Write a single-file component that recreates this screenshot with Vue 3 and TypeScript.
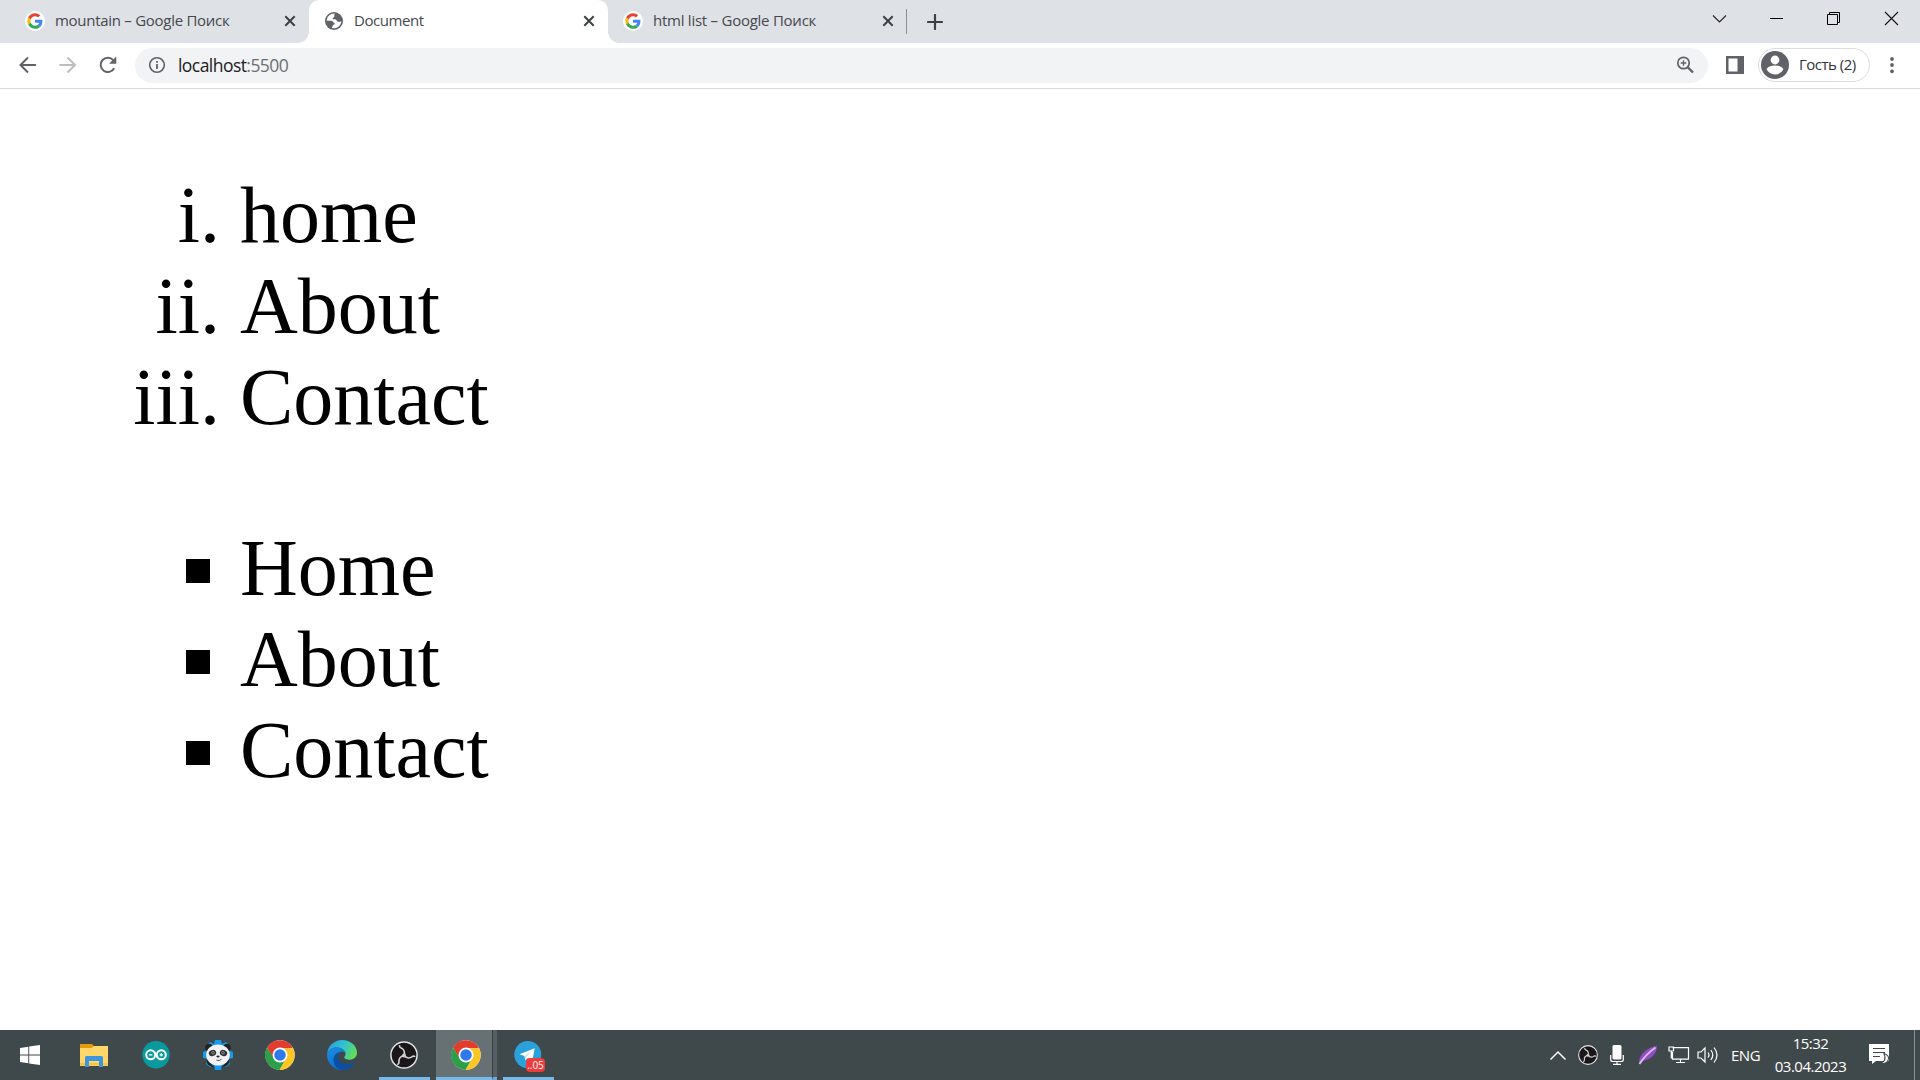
<script setup lang="ts">
interface Tab {
  title: string
  icon: 'google' | 'globe'
  active?: boolean
  spacing: number
}

const tabs: Tab[] = [
  { title: 'mountain – Google Поиск', icon: 'google', spacing: -0.28 },
  { title: 'Document', icon: 'globe', active: true, spacing: -0.45 },
  { title: 'html list – Google Поиск', icon: 'google', spacing: -0.25 },
]

const ordered: string[] = ['home', 'About', 'Contact']
const unordered: string[] = ['Home', 'About', 'Contact']
</script>

<template>
  <div class="screen">
    <svg class="defs" width="0" height="0" aria-hidden="true">
      <symbol id="chrome" viewBox="0 0 48 48">
        <circle cx="24" cy="24" r="23.5" fill="#fff" />
        <path d="M24 13h20.8A24 24 0 0 0 3.2 12l10.4 18z" fill="#e33b2e" />
        <path d="M33.5 29.5 23.1 48A24 24 0 0 0 44.8 13H24z" fill="#fcc625" />
        <path d="M14.5 29.5 3.2 12A24 24 0 0 0 23.1 48l10.4-18.5z" fill="#2e9f49" />
        <circle cx="24" cy="24" r="12" fill="#fff" />
        <circle cx="24" cy="24" r="9.2" fill="#2f79ea" />
      </symbol>
      <symbol id="obs" viewBox="0 0 28 28">
        <circle cx="14" cy="14" r="13.1" fill="#191719" stroke="#e4e4e4" stroke-width="1.5" />
        <g fill="none" stroke="#cfcfcf" stroke-width="1.700" stroke-linecap="round">
          <path d="M14 14.300C15.300 10.500 13.200 7.800 10.800 6.800Q9.300 6 9.500 4.800" />
          <path d="M14 14.300C15.300 10.500 13.200 7.800 10.800 6.800Q9.300 6 9.500 4.800" transform="rotate(120 14 14.500)" />
          <path d="M14 14.300C15.300 10.500 13.200 7.800 10.800 6.800Q9.300 6 9.500 4.800" transform="rotate(240 14 14.500)" />
        </g>
        <circle cx="14" cy="14.500" r="2" fill="#cfcfcf" />
      </symbol>
    </svg>

    <header class="strip">
      <div v-for="tab in tabs" :key="tab.title" class="tab" :class="{ active: tab.active }">
        <svg v-if="tab.icon === 'google'" class="fav" viewBox="0 0 20 20">
          <circle cx="10" cy="10" r="10" fill="#fff" />
          <g transform="translate(2.300 2.300) scale(.322)">
            <path fill="#ea4335" d="M24 9.500c3.540 0 6.710 1.220 9.210 3.600l6.850-6.850C35.900 2.380 30.470 0 24 0 14.620 0 6.510 5.380 2.560 13.220l7.980 6.190C12.430 13.720 17.740 9.500 24 9.500z" />
            <path fill="#4285f4" d="M46.980 24.550c0-1.570-.15-3.090-.38-4.550H24v9.020h12.940c-.58 2.960-2.260 5.480-4.780 7.180l7.730 6c4.510-4.180 7.090-10.360 7.090-17.650z" />
            <path fill="#fbbc05" d="M10.530 28.590c-.48-1.450-.76-2.990-.76-4.590s.27-3.140.76-4.590l-7.980-6.190C.92 16.460 0 20.120 0 24c0 3.880.92 7.540 2.560 10.780l7.970-6.190z" />
            <path fill="#34a853" d="M24 48c6.480 0 11.930-2.130 15.890-5.810l-7.730-6c-2.150 1.450-4.920 2.300-8.160 2.300-6.260 0-11.570-4.220-13.470-9.910l-7.980 6.190C6.510 42.620 14.620 48 24 48z" />
          </g>
        </svg>
        <svg v-else class="fav" viewBox="0 0 20 20">
          <circle cx="10" cy="10" r="9" fill="#5f6368" />
          <path d="M10.800 2.600C6.500 2.400 2.900 5.600 2.700 9.700H6.500c1.500 0 2.100.5 2.600 1.400.5.800 1.600.6 1.600 1.700 0 1.200-1.900.9-2.200 2.200L8 17.100c5 1.200 9.300-2.500 9.300-7.100-1.300 1.100-2.400 1.200-3.600.6-1-.5-.8-1.900-2-2.200-1.200-.3-2.700.3-3-.7-.2-.9.900-1.100 1.500-1.800.6-.7-.2-2.200.6-3.300z" fill="#fff" />
        </svg>
        <span class="title" :style="{ letterSpacing: tab.spacing + 'px' }">{{ tab.title }}</span>
        <svg class="x" viewBox="0 0 12 12"><path d="M1.300 1.300l9.400 9.400M10.700 1.300l-9.400 9.400" stroke="#3c4043" stroke-width="2" /></svg>
      </div>
      <i class="sep"></i>
      <svg class="plus" viewBox="0 0 16 16"><path d="M8 1v14M1 8h14" stroke="#3c4043" stroke-width="2.200" stroke-linecap="round" /></svg>
      <div class="win">
        <svg width="57" height="43"><path d="M23 15.500l6.500 6.500 6.500-6.500" fill="none" stroke="#222" stroke-width="1.100" /></svg>
        <svg width="58" height="43"><path d="M23 18.500h13" stroke="#000" /></svg>
        <svg width="57" height="43"><path d="M22.500 14.500h10v10h-10zM24.500 14.500v-2h10v10h-2" fill="none" stroke="#000" /></svg>
        <svg width="58" height="43"><path d="M23 12l13 13M36 12L23 25" stroke="#111" stroke-width="1.100" /></svg>
      </div>
    </header>

    <nav class="toolbar">
      <svg class="t-back" width="20" height="20"><path d="M18 10H3M10 2.500L2.500 10l7.500 7.500" fill="none" stroke="#5f6368" stroke-width="2" /></svg>
      <svg class="t-fwd" width="20" height="20"><path d="M1.500 10h15M9.500 2.500l7.500 7.500-7.500 7.500" fill="none" stroke="#bdbec0" stroke-width="2" /></svg>
      <svg class="t-rel" width="20" height="20"><path d="M16.200 13.300A7.200 7.200 0 1 1 15.300 5.100L17 7" fill="none" stroke="#5f6368" stroke-width="2" /><path d="M18.300 1.500v7.300H11z" fill="#5f6368" /></svg>
      <div class="omni">
        <svg class="info" width="18" height="18"><circle cx="9" cy="9" r="7.300" fill="none" stroke="#5f6368" stroke-width="1.600" /><path d="M9 8v5M9 5v1.700" stroke="#5f6368" stroke-width="1.800" /></svg>
        <span class="url">localhost<em>:5500</em></span>
        <svg class="mag" width="18" height="18"><circle cx="7.500" cy="7" r="5.700" fill="none" stroke="#5f6368" stroke-width="1.700" /><path d="M4.700 7h5.600M7.500 4.200v5.600" stroke="#5f6368" stroke-width="1.400" /><path d="M11.500 11l5.500 5.500" stroke="#5f6368" stroke-width="2.400" /></svg>
      </div>
      <svg class="panel" width="18" height="18"><path d="M0 0h18v18H0zM2.500 2.500v13h9v-13z" fill="#5f6368" fill-rule="evenodd" /></svg>
      <div class="profile">
        <svg width="28" height="28"><circle cx="14" cy="14" r="14" fill="#5f6368" /><circle cx="14" cy="9" r="4.400" fill="#fff" /><path d="M5.500 18.300c1.500-3 5.500-3.900 8.500-3.900s7 .9 8.500 3.900a9.600 9.600 0 0 1-17 0z" fill="#fff" /></svg>
        <span>Гость (2)</span>
      </div>
      <svg class="dots" width="6" height="18" fill="#5f6368"><circle cx="3" cy="3" r="1.900" /><circle cx="3" cy="9" r="1.900" /><circle cx="3" cy="15.300" r="1.900" /></svg>
    </nav>

    <main class="page">
      <ol>
        <li v-for="item in ordered" :key="item">{{ item }}</li>
      </ol>
      <ul>
        <li v-for="item in unordered" :key="item"><span>{{ item }}</span></li>
      </ul>
    </main>

    <footer class="taskbar">
      <div class="app start">
        <svg width="20" height="20" fill="#fff"><path d="M0 2.900l8.300-1.200v7.800H0zM9.200 1.500L20 0v9.500H9.200zM0 10.500h8.300v7.800L0 17.100zM9.200 10.500H20V20L9.200 18.500z" /></svg>
      </div>
      <div class="app">
        <svg width="28" height="24" viewBox="0 0 28 24">
          <path d="M0 1h12l2 2v4H0z" fill="#e09a0b" />
          <path d="M0 5h11.500l2.500-2h14v20H0z" fill="#ffd667" />
          <path d="M0 20h28v2.500H0z" fill="#f3c44c" />
          <path d="M5 24v-9.500a1.500 1.500 0 0 1 1.500-1.500h15a1.500 1.500 0 0 1 1.500 1.500V24h-4v-6H9v6z" fill="#3c96de" />
        </svg>
      </div>
      <div class="app">
        <svg width="28" height="28"><circle cx="14" cy="13.800" r="13.700" fill="#089a9f" /><g fill="none" stroke="#fff" stroke-width="2"><circle cx="8.700" cy="13.800" r="4.500" /><circle cx="19.300" cy="13.800" r="4.500" /><path d="M12.300 11l3.400 5.600" /><path d="M7 13.800h3.400M17.600 13.800H21M19.300 12.100v3.400" stroke-width="1.200" /></g></svg>
      </div>
      <div class="app">
        <svg width="30" height="30" viewBox="0 0 30 30">
          <path d="M12 0h6l1 4 4-2 4 4-2 4 5 2v6l-5 1 2 5-4 3-4-2-1 5h-6l-1-5-4 2-4-3 2-5-5-1v-6l5-2-2-4 4-4 4 2z" fill="#139cec" />
          <circle cx="6" cy="7.500" r="3.800" fill="#202326" /><circle cx="24" cy="7.500" r="3.800" fill="#202326" />
          <path d="M5 19c-2 2-1 5 1 6.500l5 2zM25 19c2 2 1 5-1 6.500l-5 2z" fill="#202326" />
          <ellipse cx="15" cy="15" rx="11.800" ry="10.500" fill="#f2f2f2" />
          <ellipse cx="9.500" cy="13" rx="3.800" ry="3" transform="rotate(-25 9.500 13)" fill="#303437" /><ellipse cx="20.500" cy="13" rx="3.800" ry="3" transform="rotate(25 20.500 13)" fill="#303437" />
          <circle cx="10" cy="12.800" r="1.300" fill="none" stroke="#999" stroke-width=".8" /><circle cx="20" cy="12.800" r="1.300" fill="none" stroke="#999" stroke-width=".8" />
          <ellipse cx="15" cy="16.500" rx="1.600" ry="1" fill="#222" /><path d="M13.500 20.200q3 1 5-1" fill="none" stroke="#555" />
        </svg>
      </div>
      <div class="app"><svg width="30" height="30"><use href="#chrome" /></svg></div>
      <div class="app">
        <svg width="30" height="30" viewBox="0 0 30 30">
          <defs>
            <linearGradient id="edgeTop" x1="0" y1=".3" x2="1" y2=".6"><stop offset="0" stop-color="#2a9fe0" /><stop offset=".5" stop-color="#2fc3d2" /><stop offset="1" stop-color="#66e04e" /></linearGradient>
            <linearGradient id="edgeLeft" x1="0" y1="0" x2=".5" y2="1"><stop offset="0" stop-color="#1b8fdf" /><stop offset="1" stop-color="#0a6fd0" /></linearGradient>
          </defs>
          <path d="M.2 13C1.200 5.500 7.500 0 15 0c8.500 0 15 5.800 15 12.500 0 4.500-3.200 7.200-7.200 7.200-3.500 0-5.600-1-5.600-2.200 0-.9 1.300-1.300 1.300-3.500C18.500 10 14 7.500 9.500 7.500 5 7.500 1.500 10 .2 13z" fill="url(#edgeTop)" />
          <path d="M.2 13C1.800 9.500 5.500 7.500 9.500 7.500c5 0 9 3 9 6.500-1-1.800-2.500-2.500-3.500-2.500-3 0-5 3-5 6.500 0 6 4.500 10.500 9 11.500A15 15 0 0 1 .2 13z" fill="url(#edgeLeft)" />
          <path d="M12.800 12c-1.700 1.200-2 3.200-2 4.500 0 4 4 7.500 9.200 7.500 4 0 6.500-1.500 7.600-1.800.4 0 .3.400.1.700C25.500 27 20.500 30.300 15 30 9 29.500 6.500 24 6.500 20c0-4 2.500-7.200 6.300-8z" fill="#0c4fa0" />
        </svg>
      </div>
      <div class="app open recorder"><svg width="28" height="28"><use href="#obs" /></svg></div>
      <div class="app current"><svg width="30" height="30"><use href="#chrome" /></svg></div>
      <i class="stack"></i>
      <div class="app open tg">
        <svg width="28" height="28"><circle cx="13.800" cy="13.600" r="13.500" fill="#2ba1db" /><path d="M5.500 13.300L20.700 7.200l-2.600 13.500-4.500-3.400-2.300 2.200-.8-4.400z" fill="#fff" /><path d="M10.500 15.100l7-5.200-5.200 6.200-1 3.200z" fill="#c2dff0" /></svg>
        <b>..05</b>
      </div>

      <div class="tray">
        <svg class="y-chev" width="18" height="12"><path d="M1.500 10.500L9 3l7.500 7.500" fill="none" stroke="#fff" stroke-width="1.500" /></svg>
        <svg class="y-obs" width="20" height="20" viewBox="0 0 28 28"><use href="#obs" /></svg>
        <svg class="y-mic" width="14" height="20"><rect x="2.500" y="0" width="9" height="14.500" rx="1.500" fill="#fff" /><path d="M.7 10v4.500q0 2 2 2h8.600q2 0 2-2V10M7 16.500v3M3 19.300h8" fill="none" stroke="#fff" stroke-width="1.200" /></svg>
        <svg class="y-pen" width="20" height="20"><path d="M1 19.500C0 10 8 3 19 .5c0 8-5 13.500-14 15.500z" fill="#8f4cc4" /><path d="M1.500 19C6 12 11 7 17.500 2.500" fill="none" stroke="#dcb8f0" stroke-width="2" /></svg>
        <svg class="y-net" width="22" height="18"><path d="M4.500 1.600h16v11.500h-16V6M8 16.500h9M12.500 13v3.500M1 1h4.500v4H1zM3.300 5v7.500" fill="none" stroke="#fff" stroke-width="1.200" /></svg>
        <svg class="y-vol" width="22" height="20"><path d="M1 7h3l4-4v14l-4-4H1z" fill="none" stroke="#fff" stroke-width="1.200" /><path d="M11 7.500q2 2.500 0 5M13.800 5q4 5 0 10M17 2.500q6 7.500 0 15" fill="none" stroke="#fff" stroke-width="1.200" /></svg>
        <span class="lang">ENG</span>
        <div class="clock"><span class="time">15:32</span><span class="date">03.04.2023</span></div>
        <svg class="y-note" width="22" height="22"><path d="M0 0h20v17H7l-4 3v-3H0z" fill="#fff" /><path d="M4 4.500h12M4 8.500h12M4 12.500h7" stroke="#3f494b" stroke-width="1.200" /><path d="M15 9.500c4 1 5.500 4 4 7s-5 4-7.500 2c3.500 0 6-3 3.500-9z" fill="#fff" stroke="#3f494b" stroke-width="1.100" /></svg>
        <i class="peek"></i>
      </div>
    </footer>
  </div>
</template>

<style>
body {
  margin: 0;
}
</style>

<style scoped>
.screen {
  width: 1920px;
  height: 1080px;
  display: flex;
  flex-direction: column;
  overflow: hidden;
  background: #fff;
  font-family: 'Open Sans', 'Noto Sans', sans-serif;
}
.defs {
  position: absolute;
}
svg {
  display: block;
  flex: none;
}
.strip {
  height: 43px;
  flex: none;
  display: flex;
  align-items: center;
  background: #dee1e6;
  padding-left: 10px;
}
.tab {
  position: relative;
  box-sizing: border-box;
  width: 299px;
  height: 43px;
  padding: 0 13px 2px 15px;
  display: flex;
  align-items: center;
}
.tab.active {
  background: #fff;
  border-radius: 10px 10px 0 0;
}
.tab.active::before,
.tab.active::after {
  content: '';
  position: absolute;
  bottom: 0;
  width: 11px;
  height: 11px;
}
.tab.active::before {
  left: -11px;
  background: radial-gradient(circle at 0 0, transparent 10.500px, #fff 11px);
}
.tab.active::after {
  right: -11px;
  background: radial-gradient(circle at 100% 0, transparent 10.500px, #fff 11px);
}
.fav {
  width: 20px;
  height: 20px;
}
.title {
  flex: 1;
  margin-left: 10px;
  padding-bottom: 2px;
  font-size: 15px;
  line-height: 20px;
  white-space: nowrap;
  color: #45494d;
}
.x {
  width: 12px;
  height: 12px;
}
.sep {
  width: 1px;
  height: 25px;
  margin-left: -1px;
  background: #8c9095;
}
.plus {
  width: 16px;
  height: 16px;
  margin-left: 20px;
}
.win {
  display: flex;
  margin-left: auto;
}
.toolbar {
  box-sizing: border-box;
  height: 46px;
  flex: none;
  display: flex;
  align-items: center;
  padding: 0 25px 1px 18px;
  border-bottom: 1px solid #d8dadd;
}
.t-fwd,
.t-rel {
  margin-left: 20px;
}
.omni {
  box-sizing: border-box;
  width: 1573px;
  height: 35px;
  margin-left: 17px;
  padding: 0 14px 0 13px;
  border-radius: 18px;
  background: #f1f3f4;
  display: flex;
  align-items: center;
}
.omni,
.panel,
.profile {
  flex: none;
}
.url {
  flex: 1;
  margin-left: 12px;
  font-size: 17.500px;
  letter-spacing: -0.55px;
  color: #202124;
}
.url em {
  font-style: normal;
  color: #6b6f74;
}
.panel {
  margin-left: 18px;
}
.profile {
  box-sizing: border-box;
  width: 112px;
  height: 34px;
  margin-left: 14px;
  padding-left: 2px;
  border: 1px solid #dadce0;
  border-radius: 17px;
  display: flex;
  align-items: center;
  gap: 10px;
  font-size: 15px;
  letter-spacing: -0.5px;
  white-space: nowrap;
  color: #303236;
}
.profile span {
  padding-bottom: 2px;
}
.dots {
  margin-left: auto;
}
.page {
  flex: 1;
  overflow: hidden;
  font-family: 'Liberation Serif', serif;
  font-size: 80px;
  line-height: 91px;
  color: #000;
}
.page ol,
.page ul {
  padding-left: 200px;
}
.page ol {
  margin: 81px 40px 79px;
  list-style: lower-roman;
}
.page ul {
  margin: 79px 40px 80px;
  list-style: square;
}
.page ul span {
  display: inline-block;
  line-height: 80px;
  vertical-align: -1px;
}
.taskbar {
  height: 50px;
  flex: none;
  display: flex;
  background: #3f494b;
  color: #fff;
}
.app {
  position: relative;
  box-sizing: border-box;
  width: 52px;
  height: 50px;
  margin-right: 10px;
  border-bottom: 3px solid transparent;
  padding-top: 3px;
  display: flex;
  align-items: center;
  justify-content: center;
}
.start {
  margin: 0 12px 0 4px;
}
.app.open {
  width: 51px;
  padding-right: 1px;
  border-color: #76b9ed;
}
.app.recorder {
  margin: 0 6px 0 1px;
}
.app.current {
  width: 56px;
  margin-right: 0;
  padding-left: 4px;
  background: #677072;
  border-color: #76b9ed;
}
.stack {
  box-sizing: border-box;
  width: 5px;
  height: 50px;
  margin-right: 6px;
  border-left: 1px solid #353e40;
  border-bottom: 3px solid #6aa8d8;
  background: #555e60;
}
.tg b {
  position: absolute;
  left: 23px;
  top: 28px;
  width: 19px;
  height: 14px;
  border-radius: 4px;
  background: #ee3b3b;
  font: 10px/14px 'Open Sans', sans-serif;
  text-align: center;
}
.tray {
  flex: none;
  margin-left: auto;
  display: flex;
  align-items: center;
}
.y-obs {
  margin-left: 11px;
}
.y-mic {
  margin-left: 12px;
}
.y-pen {
  margin-left: 14px;
}
.y-net {
  margin-left: 10px;
}
.y-vol {
  margin-left: 7px;
}
.lang {
  width: 37px;
  margin-left: 12px;
  font-size: 15px;
  letter-spacing: -0.5px;
}
.clock {
  width: 85px;
  display: flex;
  flex-direction: column;
  align-items: center;
  font-size: 15px;
  line-height: 23px;
  letter-spacing: -0.5px;
}
.y-note {
  margin-left: 16px;
}
.peek {
  width: 1px;
  height: 50px;
  margin: 0 5px 0 23px;
  background: #8b9192;
}
</style>
